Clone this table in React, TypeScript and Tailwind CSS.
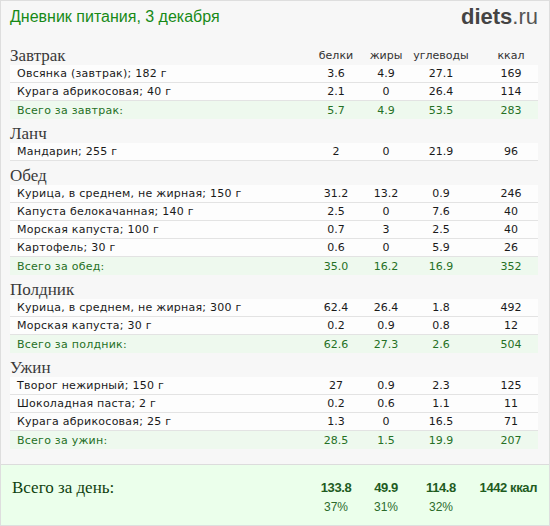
type Item = { name: string; p: string; f: string; c: string; k: string };
type Meal = { title: string; items: Item[]; total?: Item };

const meals: Meal[] = [
  {
    title: "Завтрак",
    items: [
      { name: "Овсянка (завтрак); 182 г", p: "3.6", f: "4.9", c: "27.1", k: "169" },
      { name: "Курага абрикосовая; 40 г", p: "2.1", f: "0", c: "26.4", k: "114" },
    ],
    total: { name: "Всего за завтрак:", p: "5.7", f: "4.9", c: "53.5", k: "283" },
  },
  {
    title: "Ланч",
    items: [{ name: "Мандарин; 255 г", p: "2", f: "0", c: "21.9", k: "96" }],
  },
  {
    title: "Обед",
    items: [
      { name: "Курица, в среднем, не жирная; 150 г", p: "31.2", f: "13.2", c: "0.9", k: "246" },
      { name: "Капуста белокачанная; 140 г", p: "2.5", f: "0", c: "7.6", k: "40" },
      { name: "Морская капуста; 100 г", p: "0.7", f: "3", c: "2.5", k: "40" },
      { name: "Картофель; 30 г", p: "0.6", f: "0", c: "5.9", k: "26" },
    ],
    total: { name: "Всего за обед:", p: "35.0", f: "16.2", c: "16.9", k: "352" },
  },
  {
    title: "Полдник",
    items: [
      { name: "Курица, в среднем, не жирная; 300 г", p: "62.4", f: "26.4", c: "1.8", k: "492" },
      { name: "Морская капуста; 30 г", p: "0.2", f: "0.9", c: "0.8", k: "12" },
    ],
    total: { name: "Всего за полдник:", p: "62.6", f: "27.3", c: "2.6", k: "504" },
  },
  {
    title: "Ужин",
    items: [
      { name: "Творог нежирный; 150 г", p: "27", f: "0.9", c: "2.3", k: "125" },
      { name: "Шоколадная паста; 2 г", p: "0.2", f: "0.6", c: "1.1", k: "11" },
      { name: "Курага абрикосовая; 25 г", p: "1.3", f: "0", c: "16.5", k: "71" },
    ],
    total: { name: "Всего за ужин:", p: "28.5", f: "1.5", c: "19.9", k: "207" },
  },
];

const cols = "grid grid-cols-[301px_50px_50px_60px_66px]";
const serif = "font-['Liberation_Serif',serif]";

function Row({ item, total }: { item: Item; total?: boolean }) {
  return (
    <div
      className={
        total
          ? `${cols} h-[18px] items-center bg-[#eef9ee] text-[#257025]`
          : `${cols} h-[18px] items-center border-b border-[#e3e3e3] bg-[#fdfdfd] text-[#1a1a1a]`
      }
    >
      <div className="pl-[7px] whitespace-nowrap tracking-[0.25px]">{item.name}</div>
      <div className="text-center">{item.p}</div>
      <div className="text-center">{item.f}</div>
      <div className="text-center">{item.c}</div>
      <div className="pl-[14px] text-center">{item.k}</div>
    </div>
  );
}

export default function App() {
  return (
    <div className="w-[550px] h-[526px] flex flex-col border border-[#dedede] bg-[#f7f7f7] font-['DejaVu_Sans',sans-serif] text-[11px] leading-[17px]">
      <div className="flex h-[32px] items-center justify-between pl-[9px] pr-[11px] mb-[8px]">
        <div className="font-['Liberation_Sans',sans-serif] text-[16px] leading-[20px] text-[#178a17]">
          Дневник питания, 3 декабря
        </div>
        <div className="font-['Liberation_Sans',sans-serif] text-[22px] leading-[24px] text-[#444]">
          <span className="font-bold">diets</span>
          <span className="text-[#555]">.ru</span>
        </div>
      </div>

      <div className="pl-[9px] pr-[11px]">
        {meals.map((meal, i) => (
          <div key={meal.title}>
            <div className={`${cols} h-[24px] items-end`}>
              <div className={`${serif} text-[17px] leading-[18px] text-[#3a3a3a]`}>{meal.title}</div>
              {i === 0 && (
                <>
                  <div className="text-center text-[#333] leading-[18px]">белки</div>
                  <div className="text-center text-[#333] leading-[18px]">жиры</div>
                  <div className="text-center text-[#333] leading-[18px]">углеводы</div>
                  <div className="pl-[14px] text-center text-[#333] leading-[18px]">ккал</div>
                </>
              )}
            </div>
            {meal.items.map((it) => (
              <Row key={it.name} item={it} />
            ))}
            {meal.total && <Row item={meal.total} total />}
          </div>
        ))}
      </div>

      <div className="mt-[15px] flex-1 border-t border-[#dcdcdc] bg-[#ebffeb] pl-[9px] pr-[11px] pt-[12px] font-['Liberation_Sans',sans-serif]">
        <div className={`${cols} h-[20px] items-center text-[13px] font-bold tracking-[-0.4px] text-[#1f5c1f]`}>
          <div className={`${serif} pl-[2px] text-[17px] font-normal tracking-normal text-[#0f3f0f]`}>Всего за день:</div>
          <div className="text-center">133.8</div>
          <div className="text-center">49.9</div>
          <div className="text-center">114.8</div>
          <div className="text-right">1442 ккал</div>
        </div>
        <div className={`${cols} h-[20px] items-center text-[12px] text-[#2c6b2c]`}>
          <div />
          <div className="text-center">37%</div>
          <div className="text-center">31%</div>
          <div className="text-center">32%</div>
          <div />
        </div>
      </div>
    </div>
  );
}
